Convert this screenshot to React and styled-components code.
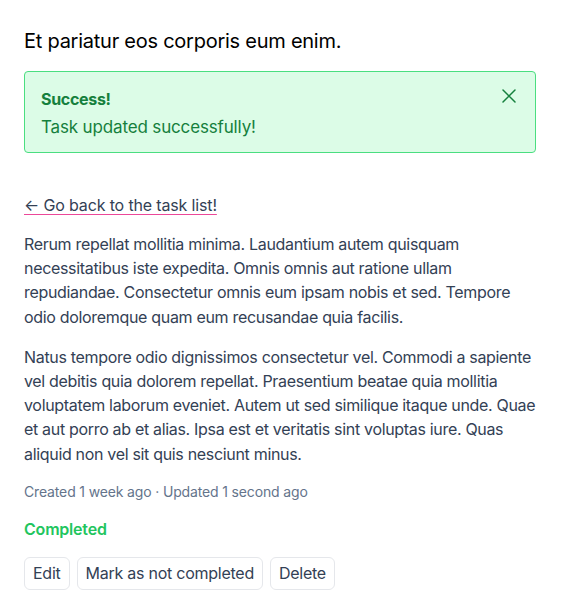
import React, { useState } from "react";
import styled, { createGlobalStyle } from "styled-components";

const GlobalStyle = createGlobalStyle`
  body {
    margin: 0;
    font-family: Inter, "Noto Sans", sans-serif;
    background: #fff;
  }
  * { box-sizing: border-box; }
`;

export default function App() {
  const [showAlert, setShowAlert] = useState(true);

  return (
    <>
      <GlobalStyle />
      <Page>
        <Title>Et pariatur eos corporis eum enim.</Title>
        {showAlert && (
          <Alert>
            <AlertText>
              <AlertTitle>Success!</AlertTitle>
              <AlertBody>Task updated successfully!</AlertBody>
            </AlertText>
            <CloseButton onClick={() => setShowAlert(false)} aria-label="Close">
              <svg width="16" height="16" viewBox="0 0 16 16" fill="none">
                <path d="M2 2L14 14M14 2L2 14" stroke="currentColor" strokeWidth="1.5" strokeLinecap="round" />
              </svg>
            </CloseButton>
          </Alert>
        )}
        <BackLink href="#">← Go back to the task list!</BackLink>
        <Paragraph>
          Rerum repellat mollitia minima. Laudantium autem quisquam necessitatibus iste expedita. Omnis omnis aut
          ratione ullam repudiandae. Consectetur omnis eum ipsam nobis et sed. Tempore odio doloremque quam eum
          recusandae quia facilis.
        </Paragraph>
        <Paragraph>
          Natus tempore odio dignissimos consectetur vel. Commodi a sapiente vel debitis quia dolorem repellat.
          Praesentium beatae quia mollitia voluptatem laborum eveniet. Autem ut sed similique itaque unde. Quae et
          aut porro ab et alias. Ipsa est et veritatis sint voluptas iure. Quas aliquid non vel sit quis nesciunt
          minus.
        </Paragraph>
        <Meta>Created 1 week ago · Updated 1 second ago</Meta>
        <Status>Completed</Status>
        <Actions>
          <Button>Edit</Button>
          <Button>Mark as not completed</Button>
          <Button>Delete</Button>
        </Actions>
      </Page>
    </>
  );
}

// Styles
const Page = styled.div`
  width: 512px;
  margin: 0 24px;
  padding-top: 26px;
  display: flex;
  flex-direction: column;
  align-items: flex-start;
`;

const Title = styled.h1`
  margin: 0;
  font-size: 20px;
  font-weight: 400;
  letter-spacing: -0.25px;
  line-height: 30px;
  color: #000;
`;

const Alert = styled.div`
  margin-top: 15px;
  width: 100%;
  height: 82px;
  display: flex;
  justify-content: space-between;
  align-items: flex-start;
  padding: 15px 16px 0 16px;
  background: #dcfce7;
  border: 1px solid #4ade80;
  border-radius: 4px;
  color: #15803d;
`;

const AlertText = styled.div`
  display: flex;
  flex-direction: column;
  gap: 4px;
`;

const AlertTitle = styled.div`
  font-size: 16px;
  font-weight: 700;
  letter-spacing: -0.3px;
  line-height: 24px;
`;

const AlertBody = styled.div`
  font-size: 17px;
  letter-spacing: -0.15px;
  line-height: 24px;
`;

const CloseButton = styled.button`
  border: none;
  background: none;
  padding: 0;
  margin: 1px 2px 0 0;
  color: #15803d;
  cursor: pointer;
  display: flex;
`;

const BackLink = styled.a`
  margin-top: 40px;
  font-size: 16px;
  letter-spacing: -0.15px;
  line-height: 24px;
  color: #334155;
  text-decoration: underline;
  text-decoration-color: #ec4899;
  text-underline-offset: 3px;
`;

const Paragraph = styled.p`
  margin: 15px 0 0 0;
  font-size: 16px;
  letter-spacing: -0.32px;
  line-height: 24.2px;
  color: #334155;
  & + & {
    margin-top: 16px;
  }
`;

const Meta = styled.div`
  margin-top: 16px;
  font-size: 14px;
  letter-spacing: -0.15px;
  line-height: 20px;
  color: #64748b;
`;

const Status = styled.div`
  margin-top: 15px;
  font-size: 16px;
  font-weight: 600;
  letter-spacing: -0.2px;
  line-height: 24px;
  color: #22c55e;
`;

const Actions = styled.div`
  margin-top: 16px;
  display: flex;
  gap: 7px;
`;

const Button = styled.button`
  height: 33px;
  padding: 0 8px;
  font-family: inherit;
  font-size: 16px;
  letter-spacing: -0.25px;
  color: #334155;
  background: #fff;
  border: 1px solid #e5e7eb;
  border-radius: 6px;
  cursor: pointer;
`;
